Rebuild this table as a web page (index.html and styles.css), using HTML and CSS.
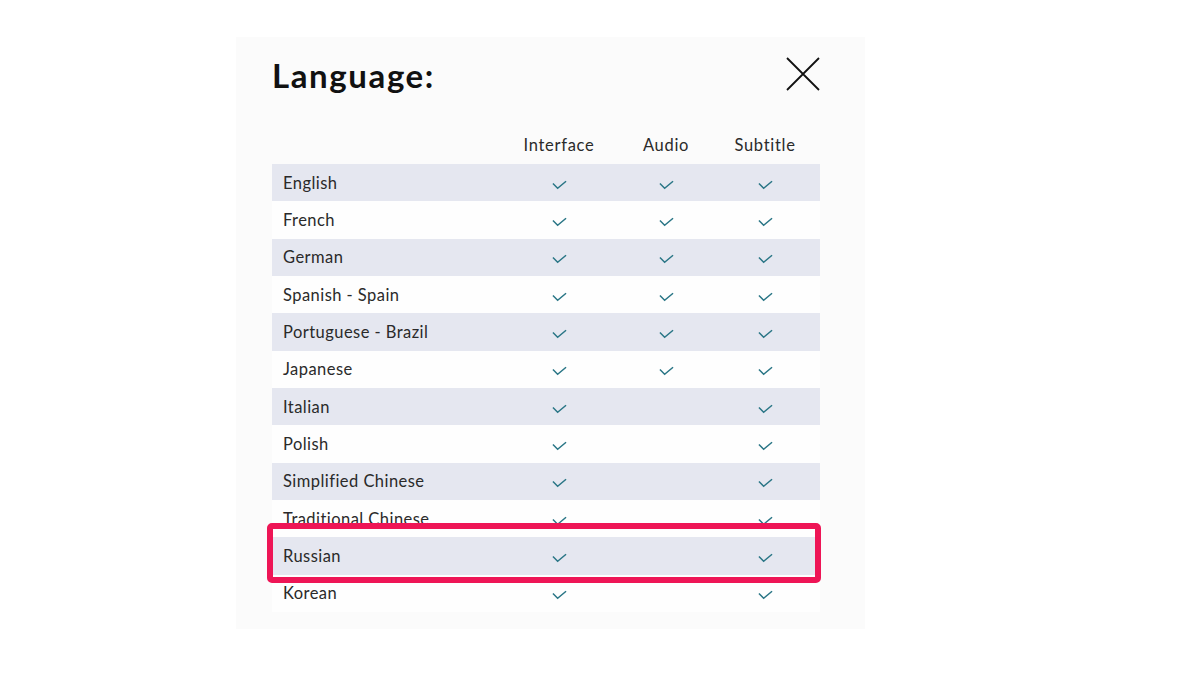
FILE: index.html
```html
<!DOCTYPE html>
<html>
<head>
<meta charset="utf-8">
<link rel="stylesheet" href="styles.css">
</head>
<body>
<div class="panel">
  <div class="head">
    <h1 class="title">Language:</h1>
    <svg class="close" width="34" height="34" viewBox="0 0 34 34"><path d="M1 1 L33 33 M33 1 L1 33" stroke="#111" stroke-width="1.8" fill="none"/></svg>
  </div>
  <div class="table">
    <div class="row header"><span></span><span class="c">Interface</span><span class="c">Audio</span><span class="c">Subtitle</span></div>
    <div class="row alt"><span class="lbl">English</span><span class="c"><svg class="chk" viewBox="0 0 16 10"><path d="M1 3.5 L6 8.5 L15 1"/></svg></span><span class="c"><svg class="chk" viewBox="0 0 16 10"><path d="M1 3.5 L6 8.5 L15 1"/></svg></span><span class="c"><svg class="chk" viewBox="0 0 16 10"><path d="M1 3.5 L6 8.5 L15 1"/></svg></span></div>
    <div class="row"><span class="lbl">French</span><span class="c"><svg class="chk" viewBox="0 0 16 10"><path d="M1 3.5 L6 8.5 L15 1"/></svg></span><span class="c"><svg class="chk" viewBox="0 0 16 10"><path d="M1 3.5 L6 8.5 L15 1"/></svg></span><span class="c"><svg class="chk" viewBox="0 0 16 10"><path d="M1 3.5 L6 8.5 L15 1"/></svg></span></div>
    <div class="row alt"><span class="lbl">German</span><span class="c"><svg class="chk" viewBox="0 0 16 10"><path d="M1 3.5 L6 8.5 L15 1"/></svg></span><span class="c"><svg class="chk" viewBox="0 0 16 10"><path d="M1 3.5 L6 8.5 L15 1"/></svg></span><span class="c"><svg class="chk" viewBox="0 0 16 10"><path d="M1 3.5 L6 8.5 L15 1"/></svg></span></div>
    <div class="row"><span class="lbl">Spanish - Spain</span><span class="c"><svg class="chk" viewBox="0 0 16 10"><path d="M1 3.5 L6 8.5 L15 1"/></svg></span><span class="c"><svg class="chk" viewBox="0 0 16 10"><path d="M1 3.5 L6 8.5 L15 1"/></svg></span><span class="c"><svg class="chk" viewBox="0 0 16 10"><path d="M1 3.5 L6 8.5 L15 1"/></svg></span></div>
    <div class="row alt"><span class="lbl">Portuguese - Brazil</span><span class="c"><svg class="chk" viewBox="0 0 16 10"><path d="M1 3.5 L6 8.5 L15 1"/></svg></span><span class="c"><svg class="chk" viewBox="0 0 16 10"><path d="M1 3.5 L6 8.5 L15 1"/></svg></span><span class="c"><svg class="chk" viewBox="0 0 16 10"><path d="M1 3.5 L6 8.5 L15 1"/></svg></span></div>
    <div class="row"><span class="lbl">Japanese</span><span class="c"><svg class="chk" viewBox="0 0 16 10"><path d="M1 3.5 L6 8.5 L15 1"/></svg></span><span class="c"><svg class="chk" viewBox="0 0 16 10"><path d="M1 3.5 L6 8.5 L15 1"/></svg></span><span class="c"><svg class="chk" viewBox="0 0 16 10"><path d="M1 3.5 L6 8.5 L15 1"/></svg></span></div>
    <div class="row alt"><span class="lbl">Italian</span><span class="c"><svg class="chk" viewBox="0 0 16 10"><path d="M1 3.5 L6 8.5 L15 1"/></svg></span><span class="c"></span><span class="c"><svg class="chk" viewBox="0 0 16 10"><path d="M1 3.5 L6 8.5 L15 1"/></svg></span></div>
    <div class="row"><span class="lbl">Polish</span><span class="c"><svg class="chk" viewBox="0 0 16 10"><path d="M1 3.5 L6 8.5 L15 1"/></svg></span><span class="c"></span><span class="c"><svg class="chk" viewBox="0 0 16 10"><path d="M1 3.5 L6 8.5 L15 1"/></svg></span></div>
    <div class="row alt"><span class="lbl">Simplified Chinese</span><span class="c"><svg class="chk" viewBox="0 0 16 10"><path d="M1 3.5 L6 8.5 L15 1"/></svg></span><span class="c"></span><span class="c"><svg class="chk" viewBox="0 0 16 10"><path d="M1 3.5 L6 8.5 L15 1"/></svg></span></div>
    <div class="row"><span class="lbl">Traditional Chinese</span><span class="c"><svg class="chk" viewBox="0 0 16 10"><path d="M1 3.5 L6 8.5 L15 1"/></svg></span><span class="c"></span><span class="c"><svg class="chk" viewBox="0 0 16 10"><path d="M1 3.5 L6 8.5 L15 1"/></svg></span></div>
    <div class="row alt"><span class="lbl">Russian</span><span class="c"><svg class="chk" viewBox="0 0 16 10"><path d="M1 3.5 L6 8.5 L15 1"/></svg></span><span class="c"></span><span class="c"><svg class="chk" viewBox="0 0 16 10"><path d="M1 3.5 L6 8.5 L15 1"/></svg></span></div>
    <div class="row"><span class="lbl">Korean</span><span class="c"><svg class="chk" viewBox="0 0 16 10"><path d="M1 3.5 L6 8.5 L15 1"/></svg></span><span class="c"></span><span class="c"><svg class="chk" viewBox="0 0 16 10"><path d="M1 3.5 L6 8.5 L15 1"/></svg></span></div>
  </div>
  <div class="highlight"></div>
</div>
</body>
</html>
```
FILE: styles.css
```css
html, body {
  margin: 0;
  padding: 0;
  background: #ffffff;
}
body {
  font-family: "Lato", "Noto Sans", sans-serif;
  color: #2a2a2a;
}
.panel {
  position: relative;
  margin: 37px 0 0 236px;
  width: 629px;
  height: 592px;
  box-sizing: border-box;
  padding: 18px 45px 0 36px;
  background: #fbfbfb;
}
.head {
  display: flex;
  justify-content: space-between;
  align-items: flex-start;
  height: 75px;
}
.title {
  margin: 0;
  font-family: "Lato", sans-serif;
  font-weight: 700;
  font-size: 33px;
  line-height: 40px;
  color: #111;
  letter-spacing: 1.6px;
}
.close {
  margin-top: 2px;
  display: block;
}
.table {
  display: flex;
  flex-direction: column;
}
.row {
  display: grid;
  grid-template-columns: 224px 126px 88px 110px;
  height: 37.33px;
  align-items: center;
  font-size: 16.5px;
  letter-spacing: 0.45px;
  background: #fefefe;
}
.row.alt {
  background: #e5e7f0;
}
.row.header {
  height: 34px;
  padding-top: 5px;
  box-sizing: border-box;
  background: transparent;
  align-items: start;
  letter-spacing: 0.7px;
}
.lbl {
  padding-left: 11px;
}
.c {
  display: flex;
  justify-content: center;
}
.chk {
  width: 15px;
  height: 10px;
  margin-top: 4px;
  fill: none;
  stroke: #2a7686;
  stroke-width: 1.6;
}
.highlight {
  position: absolute;
  left: 31px;
  top: 486px;
  width: 554px;
  height: 60px;
  box-sizing: border-box;
  border: 6px solid #ee1556;
  border-radius: 5px;
}
```
